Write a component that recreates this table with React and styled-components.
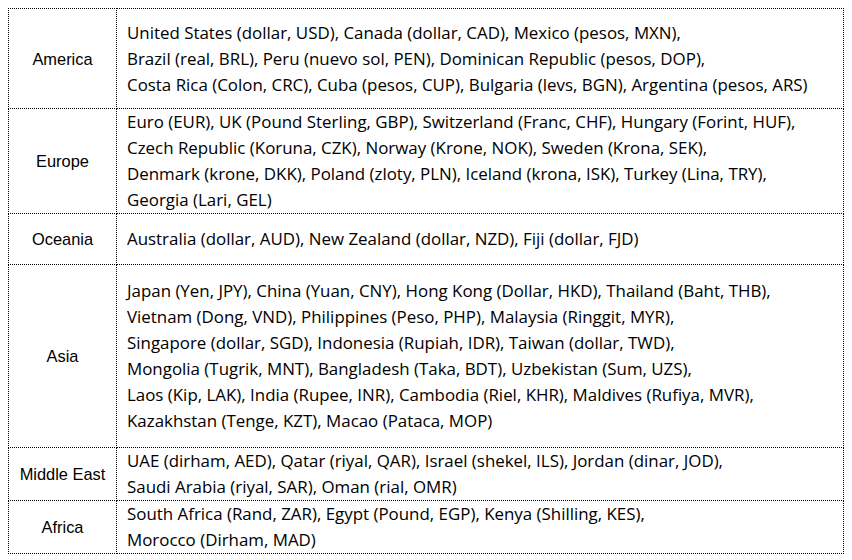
import React from "react";
import styled, { createGlobalStyle } from "styled-components";

const GlobalStyle = createGlobalStyle`
  body {
    margin: 8px;
    background: #fff;
  }
`;

const Table = styled.table`
  width: 836px;
  border-collapse: collapse;
  table-layout: fixed;
  border: 1px dotted #000;
`;

const Row = styled.tr`
  height: ${(p) => p.h}px;
`;

const Region = styled.td`
  width: 107px;
  border: 1px dotted #000;
  padding: 1px 0 0;
  text-align: center;
  vertical-align: middle;
  font-family: "Liberation Sans", Arial, sans-serif;
  font-size: 16.4px;
  color: #000;
`;

const Currencies = styled.td`
  border: 1px dotted #000;
  padding: 0 10px;
  vertical-align: middle;
  font-family: "Open Sans", "Noto Sans CJK KR", sans-serif;
  font-size: 16.9px;
  line-height: 26px;
  color: #000;
  white-space: nowrap;
`;

const rows = [
  {
    region: "America",
    h: 100,
    lines: [
      "United States (dollar, USD), Canada (dollar, CAD), Mexico (pesos, MXN),",
      "Brazil (real, BRL), Peru (nuevo sol, PEN), Dominican Republic (pesos, DOP),",
      "Costa Rica (Colon, CRC), Cuba (pesos, CUP), Bulgaria (levs, BGN), Argentina (pesos, ARS)",
    ],
  },
  {
    region: "Europe",
    h: 105,
    lines: [
      "Euro (EUR), UK (Pound Sterling, GBP), Switzerland (Franc, CHF), Hungary (Forint, HUF),",
      "Czech Republic (Koruna, CZK), Norway (Krone, NOK), Sweden (Krona, SEK),",
      "Denmark (krone, DKK), Poland (zloty, PLN), Iceland (krona, ISK), Turkey (Lina, TRY),",
      "Georgia (Lari, GEL)",
    ],
  },
  {
    region: "Oceania",
    h: 51,
    lines: ["Australia (dollar, AUD), New Zealand (dollar, NZD), Fiji (dollar, FJD)"],
  },
  {
    region: "Asia",
    h: 183,
    lines: [
      "Japan (Yen, JPY), China (Yuan, CNY), Hong Kong (Dollar, HKD), Thailand (Baht, THB),",
      "Vietnam (Dong, VND), Philippines (Peso, PHP), Malaysia (Ringgit, MYR),",
      "Singapore (dollar, SGD), Indonesia (Rupiah, IDR), Taiwan (dollar, TWD),",
      "Mongolia (Tugrik, MNT), Bangladesh (Taka, BDT), Uzbekistan (Sum, UZS),",
      "Laos (Kip, LAK), India (Rupee, INR), Cambodia (Riel, KHR), Maldives (Rufiya, MVR),",
      "Kazakhstan (Tenge, KZT), Macao (Pataca, MOP)",
    ],
  },
  {
    region: "Middle East",
    h: 52,
    lines: [
      "UAE (dirham, AED), Qatar (riyal, QAR), Israel (shekel, ILS), Jordan (dinar, JOD),",
      "Saudi Arabia (riyal, SAR), Oman (rial, OMR)",
    ],
  },
  {
    region: "Africa",
    h: 51,
    lines: [
      "South Africa (Rand, ZAR), Egypt (Pound, EGP), Kenya (Shilling, KES),",
      "Morocco (Dirham, MAD)",
    ],
  },
];

export default function App() {
  return (
    <>
      <GlobalStyle />
      <Table>
        <tbody>
          {rows.map((r) => (
            <Row key={r.region} h={r.h}>
              <Region>{r.region}</Region>
              <Currencies>
                {r.lines.map((l, i) => (
                  <div key={i}>{l}</div>
                ))}
              </Currencies>
            </Row>
          ))}
        </tbody>
      </Table>
    </>
  );
}
